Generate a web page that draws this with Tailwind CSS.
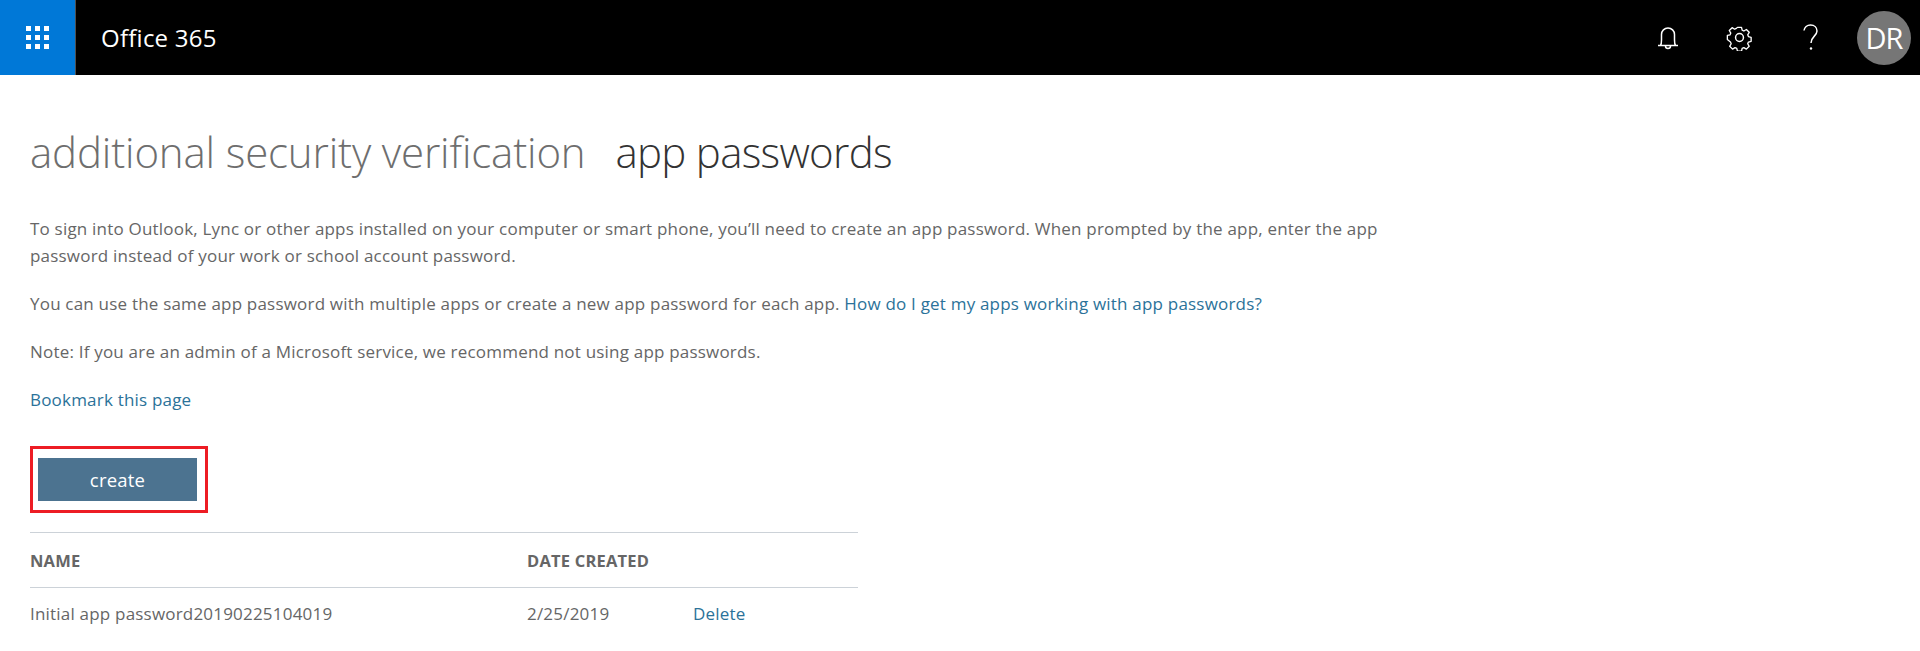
<!DOCTYPE html>
<html lang="en">
  <head>
    <meta charset="UTF-8" />
    <title>app passwords</title>
    <script src="https://cdn.jsdelivr.net/npm/@tailwindcss/browser@4"></script>
  </head>
  <body class="bg-white overflow-hidden font-['Open_Sans',sans-serif] text-[17px] tracking-[0.2px] text-[#666666]">
    <!-- top bar -->
    <header class="h-[75px] bg-black flex items-center text-white">
      <div class="w-[76px] h-full bg-[#0078d7] border-r border-[#505050] flex items-center justify-center">
        <svg width="24" height="24" viewBox="0 0 24 24" fill="#fff">
          <rect x="0" y="0" width="5" height="5" /><rect x="9" y="0" width="5" height="5" /><rect x="18" y="0" width="5" height="5" />
          <rect x="0" y="9" width="5" height="5" /><rect x="9" y="9" width="5" height="5" /><rect x="18" y="9" width="5" height="5" />
          <rect x="0" y="18" width="5" height="5" /><rect x="9" y="18" width="5" height="5" /><rect x="18" y="18" width="5" height="5" />
        </svg>
      </div>
      <div class="ml-[25px] text-[24px] tracking-[0.25px]">Office 365</div>
      <div class="ml-auto flex items-center">
        <svg class="mr-[47px]" width="22" height="24" viewBox="0 0 22 24" fill="none" stroke="#fff" stroke-width="1.5">
          <path d="M1 19.5h20M3.500 19.500c1-1.500 1-3 1-5.500V8.500a6.500 6.500 0 0 1 13 0V14c0 2.500 0 4 1 5.500" />
          <path d="M8.500 20a2.500 2.500 0 0 0 5 0" />
        </svg>
        <svg class="mr-[49px]" width="27" height="27" viewBox="0 0 24 24" fill="none" stroke="#fff" stroke-width="1.300" stroke-linejoin="round">
          <circle cx="12" cy="12" r="3.500" />
          <path d="M10 2h4l.6 2.800 1.700.8 2.500-1.500 2.800 2.800-1.500 2.500.7 1.700 2.700.7v4l-2.700.7-.7 1.700 1.500 2.500-2.800 2.800-2.500-1.500-1.700.7-.6 2.800h-4l-.7-2.800-1.700-.7-2.500 1.500-2.800-2.800 1.500-2.500-.7-1.700L0 14v-4l2.700-.7.7-1.700-1.500-2.500 2.800-2.800 2.500 1.500 1.700-.8z" transform="translate(1.200 1.200) scale(0.9)" />
        </svg>
        <svg class="mr-[37px]" width="18" height="27" viewBox="0 0 18 27" fill="none" stroke="#fff" stroke-width="1.500">
          <path d="M2 6.500C2.500 3.500 5 1 8.500 1c4 0 6.500 2.500 6.500 6 0 5-6 5.500-6 12" />
          <circle cx="9" cy="24.500" r="1.200" fill="#fff" stroke="none" />
        </svg>
        <div class="w-[54px] h-[54px] mr-[9px] rounded-full bg-[#767676] flex items-center justify-center text-[29px] tracking-[-1px]">DR</div>
      </div>
    </header>

    <main class="pl-[30px] pt-[49px]">
      <h1 class="flex gap-[30px] text-[42px] leading-[56px] tracking-[-0.15px] font-[350]">
        <span class="text-[#6e6e6e]">additional security verification</span>
        <span class="text-[#333333] tracking-[-0.7px]">app passwords</span>
      </h1>

      <div class="w-[1370px] mt-[35px] leading-[27px]">
        <p>To sign into Outlook, Lync or other apps installed on your computer or smart phone, you’ll need to create an app password. When prompted by the app, enter the app password instead of your work or school account password.</p>
        <p class="mt-[21px]">You can use the same app password with multiple apps or create a new app password for each app. <a href="#" class="text-[#2b7299]">How do I get my apps working with app passwords?</a></p>
        <p class="mt-[21px]">Note: If you are an admin of a Microsoft service, we recommend not using app passwords.</p>
        <p class="mt-[21px]"><a href="#" class="text-[#2b7299]">Bookmark this page</a></p>
      </div>

      <div class="w-[178px] h-[67px] mt-[33px] border-[3px] border-[#ed1c24] pl-[5px] pt-[9px]">
        <button class="w-[159px] h-[43px] bg-[#4c7390] text-white text-[18.5px]">create</button>
      </div>

      <table class="w-[828px] mt-[19px] table-fixed border-t border-[#ccd2d8] text-left">
        <thead>
          <tr class="h-[55px] border-b border-[#ccd2d8] text-[16.5px]">
            <th class="w-[497px] pt-[2px] font-bold">NAME</th>
            <th class="w-[166px] pt-[2px] font-bold">DATE CREATED</th>
            <th></th>
          </tr>
        </thead>
        <tbody>
          <tr class="h-[52px]">
            <td>Initial app password20190225104019</td>
            <td>2/25/2019</td>
            <td><a href="#" class="text-[#2b7299]">Delete</a></td>
          </tr>
        </tbody>
      </table>
    </main>
  </body>
</html>
